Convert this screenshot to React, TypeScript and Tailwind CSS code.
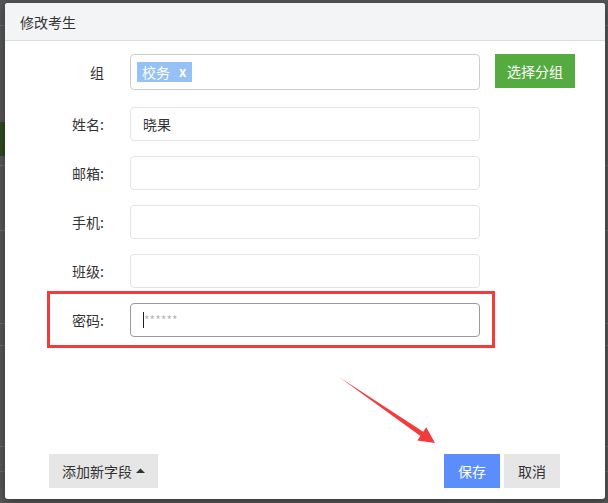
import React from "react";

const font = { fontFamily: '"Noto Sans CJK SC", "Noto Sans", sans-serif' };

function Row({ label, children, h = "h-[34px]" }: { label: string; children: React.ReactNode; h?: string }) {
  return (
    <div className={`flex items-center ${h}`}>
      <div className="w-[99px] text-right text-[14px] text-[#333] pr-[0px]">{label}</div>
      <div className="ml-[26px] flex h-full items-center">{children}</div>
    </div>
  );
}

export default function App() {
  return (
    <div className="relative h-[503px] w-[608px] overflow-hidden bg-[#565656] text-[14px] leading-[20px]" style={font}>
      {/* faint background page content */}
      <div className="absolute left-0 top-[25px] h-px w-[608px] bg-[#686868]" />
      <div className="absolute left-0 top-[122px] h-[34px] w-[6px] bg-[#2f4a24]" />
      <div className="absolute left-0 top-[165px] h-px w-[608px] bg-[#686868]" />
      <div className="absolute left-0 top-[230px] h-px w-[608px] bg-[#6a6a6a]" />
      <div className="absolute left-0 top-[323px] h-px w-[608px] bg-[#6a6a6a]" />
      <div className="absolute left-0 top-[345px] h-px w-[608px] bg-[#686868]" />
      <div className="absolute left-0 top-[446px] h-px w-[608px] bg-[#686868]" />
      <div className="absolute left-0 top-[471px] h-px w-[608px] bg-[#686868]" />

      {/* modal */}
      <div className="absolute left-[5px] top-[3px] flex h-[496px] w-[600px] flex-col overflow-hidden rounded-[3px] bg-white shadow-[0_2px_8px_rgba(0,0,0,0.4)]">
        <div className="flex h-[38px] shrink-0 items-center border-b border-[#dcdcdc] bg-[#f3f4f6] pl-[15px] text-[14px] text-[#333]">
          修改考生
        </div>

        <div className="flex flex-col pt-[13px]">
          <Row label="组" h="h-[36px]">
            <div className="flex h-[36px] w-[350px] items-center rounded-[4px] border border-[#cccccc] pl-[6px]">
              <span className="flex h-[20px] items-center bg-[#95c1f5] pl-[5px] pr-[6px] text-[14px] text-white">
                校务<span className="ml-[9px] text-[13px] font-bold">x</span>
              </span>
            </div>
            <button className="ml-[15px] flex h-[34px] w-[80px] items-center justify-center self-start bg-[#55ab3f] text-[14px] text-white">
              选择分组
            </button>
          </Row>

          <div className="mt-[17px] flex flex-col gap-[15px]">
            <Row label="姓名:">
              <div className="flex h-[34px] w-[350px] items-center rounded-[4px] border border-[#e3e3e3] pl-[12px] text-[#333]">
                晓果
              </div>
            </Row>
            <Row label="邮箱:">
              <div className="h-[34px] w-[350px] rounded-[4px] border border-[#e3e3e3]" />
            </Row>
            <Row label="手机:">
              <div className="h-[34px] w-[350px] rounded-[4px] border border-[#e3e3e3]" />
            </Row>
            <Row label="班级:">
              <div className="h-[34px] w-[350px] rounded-[4px] border border-[#e3e3e3]" />
            </Row>
            <Row label="密码:">
              <div className="flex h-[34px] w-[350px] items-center rounded-[4px] border border-[#9a9a9a] pl-[12px]">
                <span className="h-[16px] w-px bg-[#222]" />
                <span className="text-[12px] leading-[16px] text-[#b8b8b8]">******</span>
              </div>
            </Row>
          </div>
        </div>

        <div className="mt-auto flex items-center pb-[11px] pl-[44px] pr-[45px]">
          <button className="flex h-[34px] w-[109px] items-center justify-center bg-[#e6e6e6] text-[14px] text-[#333]">
            添加新字段
            <svg width="9" height="6" viewBox="0 0 9 6" className="ml-[4px]">
              <polygon points="0,5 9,5 4.5,0.5" fill="#333" />
            </svg>
          </button>
          <div className="ml-auto flex gap-[4px]">
            <button className="flex h-[34px] w-[56px] items-center justify-center bg-[#5b8dfd] text-[14px] text-white">保存</button>
            <button className="flex h-[34px] w-[56px] items-center justify-center bg-[#e6e6e6] text-[14px] text-[#333]">取消</button>
          </div>
        </div>
      </div>

      {/* annotations */}
      <div className="absolute left-[47px] top-[291px] h-[57px] w-[448px] border-[3px] border-[#f53a3a]" />
      <svg className="absolute left-0 top-0" width="608" height="503" viewBox="0 0 608 503">
        <polygon
          points="339,377 423.2,431.8 426.3,427.3 435,443 417.3,440.5 420.4,436"
          fill="#f43b3b"
        />
      </svg>
    </div>
  );
}
